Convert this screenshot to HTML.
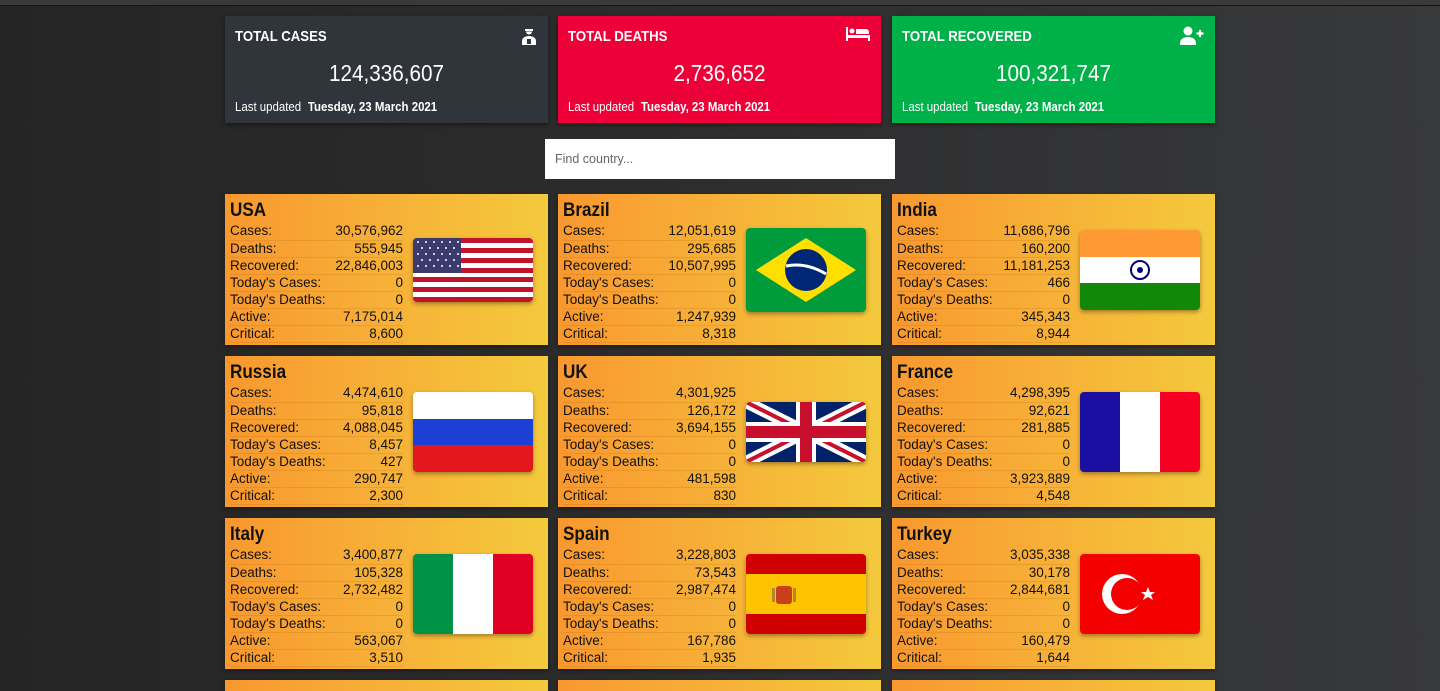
<!DOCTYPE html>
<html style="width:1440px;height:691px;overflow:hidden"><head><meta charset="utf-8"><style>
*{margin:0;padding:0;box-sizing:border-box}
body{width:1440px;height:691px;overflow:hidden;background:linear-gradient(90deg,#252525 0%,#2b2b2c 40%,#38393b 100%);font-family:"Liberation Sans Narrow","Liberation Sans",sans-serif;position:relative}
.topline{position:absolute;left:0;top:0;width:1440px;height:6px;background:#3a3a3a;border-bottom:1px solid #151515}
.tc{position:absolute;top:16px;width:323px;height:107px;color:#fff;box-shadow:0 2px 4px rgba(0,0,0,.4)}
.tc h3{position:absolute;left:10px;top:12px;font-size:15px;font-weight:bold;transform:scaleX(.88);transform-origin:left;white-space:nowrap}
.tc .n{position:absolute;left:0;right:0;top:44px;text-align:center;font-size:23px;transform:scaleX(.9)}
.tc .u{position:absolute;left:10px;top:83px;font-size:13px;transform:scaleX(.88);transform-origin:left;white-space:nowrap}
.tc .u b{margin-left:4px}
.tc svg{position:absolute;right:10px;top:10px}
.search{position:absolute;left:545px;top:139px;width:350px;height:40px;background:#fff;color:#666;font-size:12.5px;padding:13px 10px}
.c{position:absolute;width:323px;height:151px;background:linear-gradient(90deg,#f8982f 0%,#f7ae37 45%,#f4c93c 100%);color:#111;box-shadow:0 2px 4px rgba(0,0,0,.35)}
.c h2{position:absolute;left:5px;top:6px;font-size:19px;font-weight:bold;transform:scaleX(.9);transform-origin:left}
.c table{position:absolute;left:5px;top:29px;width:173px;border-collapse:collapse;font-size:13.5px}
.c td{height:17px;line-height:16px;border-bottom:1px solid rgba(150,80,0,.15);padding:0;white-space:nowrap}
.c td+td{text-align:right}
.c svg{position:absolute;left:188px;border-radius:4px;box-shadow:0 2px 4px rgba(0,0,0,.35);overflow:hidden}
</style></head><body>
<div class="topline"></div>

<div class="tc" style="left:225px;background:#30353b"><h3>TOTAL CASES</h3>
<svg width="18" height="20" viewBox="0 0 18 20"><path d="M5 3h8v2H5z M6 5.5h6a3 3 0 0 1-6 0z M2 19v-4c0-3 3-5 7-5s7 2 7 5v4z" fill="#fff"/><path d="M7 13h4v5H7z" fill="#30353b"/></svg>
<div class="n">124,336,607</div><div class="u">Last updated <b>Tuesday, 23 March 2021</b></div></div>

<div class="tc" style="left:558px;background:#ec0037"><h3>TOTAL DEATHS</h3>
<svg width="26" height="16" viewBox="0 0 26 16"><path d="M1 1h2v8h22v6h-2v-3H3v3H1z" fill="#fff"/><circle cx="7" cy="5" r="2.5" fill="#fff"/><path d="M11 3h10a3 3 0 0 1 3 3v2H11z" fill="#fff"/></svg>
<div class="n">2,736,652</div><div class="u">Last updated <b>Tuesday, 23 March 2021</b></div></div>

<div class="tc" style="left:892px;background:#00b048"><h3>TOTAL RECOVERED</h3>
<svg width="26" height="20" viewBox="0 0 26 20"><circle cx="9" cy="5" r="4.5" fill="#fff"/><path d="M1 19v-2c0-3.5 3-6 8-6s8 2.5 8 6v2z" fill="#fff"/><path d="M21 4v7M17.5 7.5h7" stroke="#fff" stroke-width="2.2"/></svg>
<div class="n">100,321,747</div><div class="u">Last updated <b>Tuesday, 23 March 2021</b></div></div>

<div class="search">Find country...</div>

<div class="c" style="left:225px;top:194px"><h2>USA</h2>
<table><tr><td>Cases:</td><td>30,576,962</td></tr><tr><td>Deaths:</td><td>555,945</td></tr><tr><td>Recovered:</td><td>22,846,003</td></tr><tr><td>Today's Cases:</td><td>0</td></tr><tr><td>Today's Deaths:</td><td>0</td></tr><tr><td>Active:</td><td>7,175,014</td></tr><tr><td>Critical:</td><td>8,600</td></tr></table>
<svg style="top:44px" width="120" height="64" viewBox="0 0 120 64"><rect width="120" height="64" fill="#fff"/><g fill="#c0142c"><rect y="0" width="120" height="5"/><rect y="10" width="120" height="5"/><rect y="20" width="120" height="5"/><rect y="30" width="120" height="5"/><rect y="39" width="120" height="5"/><rect y="49" width="120" height="5"/><rect y="59" width="120" height="5"/></g><rect width="48" height="35" fill="#3c3b6e"/><g fill="#fff"><circle cx="5" cy="4" r="1"/><circle cx="13" cy="4" r="1"/><circle cx="21" cy="4" r="1"/><circle cx="29" cy="4" r="1"/><circle cx="37" cy="4" r="1"/><circle cx="45" cy="4" r="1"/><circle cx="9" cy="10" r="1"/><circle cx="17" cy="10" r="1"/><circle cx="25" cy="10" r="1"/><circle cx="33" cy="10" r="1"/><circle cx="41" cy="10" r="1"/><circle cx="5" cy="16" r="1"/><circle cx="13" cy="16" r="1"/><circle cx="21" cy="16" r="1"/><circle cx="29" cy="16" r="1"/><circle cx="37" cy="16" r="1"/><circle cx="45" cy="16" r="1"/><circle cx="9" cy="22" r="1"/><circle cx="17" cy="22" r="1"/><circle cx="25" cy="22" r="1"/><circle cx="33" cy="22" r="1"/><circle cx="41" cy="22" r="1"/><circle cx="5" cy="28" r="1"/><circle cx="13" cy="28" r="1"/><circle cx="21" cy="28" r="1"/><circle cx="29" cy="28" r="1"/><circle cx="37" cy="28" r="1"/><circle cx="45" cy="28" r="1"/></g></svg></div>

<div class="c" style="left:558px;top:194px"><h2>Brazil</h2>
<table><tr><td>Cases:</td><td>12,051,619</td></tr><tr><td>Deaths:</td><td>295,685</td></tr><tr><td>Recovered:</td><td>10,507,995</td></tr><tr><td>Today's Cases:</td><td>0</td></tr><tr><td>Today's Deaths:</td><td>0</td></tr><tr><td>Active:</td><td>1,247,939</td></tr><tr><td>Critical:</td><td>8,318</td></tr></table>
<svg style="top:34px" width="120" height="84" viewBox="0 0 120 84"><rect width="120" height="84" fill="#009c3b"/><path d="M60 10L110 42L60 74L10 42z" fill="#ffdf00"/><circle cx="60" cy="42" r="21" fill="#002776"/><path d="M40 38q20-4 40 8" stroke="#fff" stroke-width="3" fill="none"/></svg></div>

<div class="c" style="left:892px;top:194px"><h2>India</h2>
<table><tr><td>Cases:</td><td>11,686,796</td></tr><tr><td>Deaths:</td><td>160,200</td></tr><tr><td>Recovered:</td><td>11,181,253</td></tr><tr><td>Today's Cases:</td><td>466</td></tr><tr><td>Today's Deaths:</td><td>0</td></tr><tr><td>Active:</td><td>345,343</td></tr><tr><td>Critical:</td><td>8,944</td></tr></table>
<svg style="top:36px" width="120" height="80" viewBox="0 0 120 80"><rect width="120" height="27" fill="#ff9933"/><rect y="27" width="120" height="26" fill="#fff"/><rect y="53" width="120" height="27" fill="#138808"/><circle cx="60" cy="40" r="9" fill="none" stroke="#000080" stroke-width="2"/><circle cx="60" cy="40" r="3" fill="#000080"/></svg></div>

<div class="c" style="left:225px;top:356px"><h2>Russia</h2>
<table><tr><td>Cases:</td><td>4,474,610</td></tr><tr><td>Deaths:</td><td>95,818</td></tr><tr><td>Recovered:</td><td>4,088,045</td></tr><tr><td>Today's Cases:</td><td>8,457</td></tr><tr><td>Today's Deaths:</td><td>427</td></tr><tr><td>Active:</td><td>290,747</td></tr><tr><td>Critical:</td><td>2,300</td></tr></table>
<svg style="top:36px" width="120" height="80" viewBox="0 0 120 80"><rect width="120" height="27" fill="#fff"/><rect y="27" width="120" height="26" fill="#1c3fd4"/><rect y="53" width="120" height="27" fill="#e4181c"/></svg></div>

<div class="c" style="left:558px;top:356px"><h2>UK</h2>
<table><tr><td>Cases:</td><td>4,301,925</td></tr><tr><td>Deaths:</td><td>126,172</td></tr><tr><td>Recovered:</td><td>3,694,155</td></tr><tr><td>Today's Cases:</td><td>0</td></tr><tr><td>Today's Deaths:</td><td>0</td></tr><tr><td>Active:</td><td>481,598</td></tr><tr><td>Critical:</td><td>830</td></tr></table>
<svg style="top:46px" width="120" height="60" viewBox="0 0 120 60"><rect width="120" height="60" fill="#012169"/><path d="M0 0L120 60M120 0L0 60" stroke="#fff" stroke-width="12"/><path d="M0 0L120 60M120 0L0 60" stroke="#c8102e" stroke-width="4"/><path d="M60 0V60M0 30H120" stroke="#fff" stroke-width="20"/><path d="M60 0V60M0 30H120" stroke="#c8102e" stroke-width="12"/></svg></div>

<div class="c" style="left:892px;top:356px"><h2>France</h2>
<table><tr><td>Cases:</td><td>4,298,395</td></tr><tr><td>Deaths:</td><td>92,621</td></tr><tr><td>Recovered:</td><td>281,885</td></tr><tr><td>Today's Cases:</td><td>0</td></tr><tr><td>Today's Deaths:</td><td>0</td></tr><tr><td>Active:</td><td>3,923,889</td></tr><tr><td>Critical:</td><td>4,548</td></tr></table>
<svg style="top:36px" width="120" height="80" viewBox="0 0 120 80"><rect width="40" height="80" fill="#1a0fa0"/><rect x="40" width="40" height="80" fill="#fff"/><rect x="80" width="40" height="80" fill="#f50022"/></svg></div>

<div class="c" style="left:225px;top:518px"><h2>Italy</h2>
<table><tr><td>Cases:</td><td>3,400,877</td></tr><tr><td>Deaths:</td><td>105,328</td></tr><tr><td>Recovered:</td><td>2,732,482</td></tr><tr><td>Today's Cases:</td><td>0</td></tr><tr><td>Today's Deaths:</td><td>0</td></tr><tr><td>Active:</td><td>563,067</td></tr><tr><td>Critical:</td><td>3,510</td></tr></table>
<svg style="top:36px" width="120" height="80" viewBox="0 0 120 80"><rect width="40" height="80" fill="#009246"/><rect x="40" width="40" height="80" fill="#fff"/><rect x="80" width="40" height="80" fill="#e00024"/></svg></div>

<div class="c" style="left:558px;top:518px"><h2>Spain</h2>
<table><tr><td>Cases:</td><td>3,228,803</td></tr><tr><td>Deaths:</td><td>73,543</td></tr><tr><td>Recovered:</td><td>2,987,474</td></tr><tr><td>Today's Cases:</td><td>0</td></tr><tr><td>Today's Deaths:</td><td>0</td></tr><tr><td>Active:</td><td>167,786</td></tr><tr><td>Critical:</td><td>1,935</td></tr></table>
<svg style="top:36px" width="120" height="80" viewBox="0 0 120 80"><rect width="120" height="80" fill="#d10000"/><rect y="20" width="120" height="40" fill="#ffc400"/><rect x="30" y="32" width="16" height="18" rx="3" fill="#c8401a"/><rect x="26" y="34" width="3" height="14" fill="#b08a30"/><rect x="47" y="34" width="3" height="14" fill="#b08a30"/></svg></div>

<div class="c" style="left:892px;top:518px"><h2>Turkey</h2>
<table><tr><td>Cases:</td><td>3,035,338</td></tr><tr><td>Deaths:</td><td>30,178</td></tr><tr><td>Recovered:</td><td>2,844,681</td></tr><tr><td>Today's Cases:</td><td>0</td></tr><tr><td>Today's Deaths:</td><td>0</td></tr><tr><td>Active:</td><td>160,479</td></tr><tr><td>Critical:</td><td>1,644</td></tr></table>
<svg style="top:36px" width="120" height="80" viewBox="0 0 120 80"><rect width="120" height="80" fill="#f40000"/><circle cx="42" cy="40" r="20" fill="#fff"/><circle cx="47" cy="40" r="16" fill="#f40000"/><polygon points="68,33 70,38 75,38 71,41 73,46 68,43 63,46 65,41 61,38 66,38" fill="#fff"/></svg></div>

<div class="c" style="left:225px;top:680px;height:11px"></div>
<div class="c" style="left:558px;top:680px;height:11px"></div>
<div class="c" style="left:892px;top:680px;height:11px"></div>
</body></html>
